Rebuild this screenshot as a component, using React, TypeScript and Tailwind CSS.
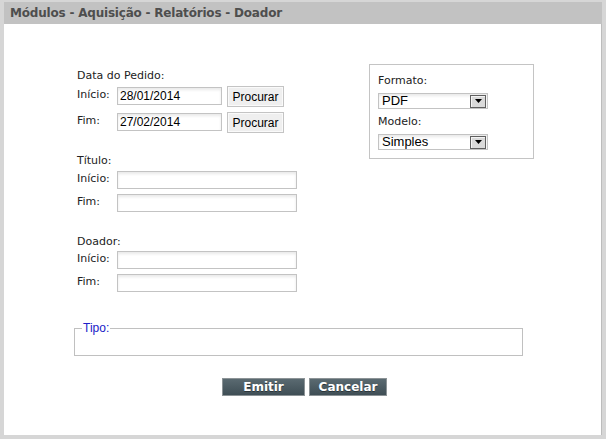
import React from 'react';

const label = "font-['DejaVu_Sans',Verdana,sans-serif] text-[11px] leading-[14px] text-[#222]";
const field = "font-['Liberation_Sans',Arial,sans-serif] text-[12px] text-black";
const inputBox =
  'border border-[#c3c3c3] bg-white shadow-[inset_0_2px_3px_rgba(0,0,0,0.09)] px-[2px] outline-none';

const TextRow: React.FC<{ name: string; value?: string; width: number; withButton?: boolean }> = ({ name, value, width, withButton }) => (
  <div className="flex items-start">
    <span className={`${label} w-[40px] ml-[3px] pt-[1px]`}>{name}</span>
    <input
      readOnly
      value={value ?? ''}
      className={`${inputBox} ${field} h-[18px] leading-[16px]`}
      style={{ width }}
    />
    {withButton && (
      <button className={`${field} ml-[5px] -mt-px h-[21px] w-[57px] border border-[#c4c4c4] bg-[#efefef] text-[#1a1a1a] shadow-[inset_0_0_0_1px_#fafafa]`}>
        Procurar
      </button>
    )}
  </div>
);

const FakeSelect: React.FC<{ value: string }> = ({ value }) => (
  <div className={`${inputBox} ${field} text-[13px] w-[110px] h-[16px] flex items-center justify-between pl-[3px] pr-px`}>
    <span className="leading-[14px]">{value}</span>
    <span className="w-[16px] h-[13px] border border-[#5f5f5f] bg-[#dadada] shadow-[inset_1px_1px_0_#f4f4f4] flex items-center justify-center">
      <svg width="7" height="4" viewBox="0 0 7 4">
        <path d="M0 0h7L3.5 4z" fill="#000" />
      </svg>
    </span>
  </div>
);

const ActionBtn: React.FC<{ width: number; children: React.ReactNode }> = ({ width, children }) => (
  <button
    className="h-[18px] border border-[#8c9396] bg-gradient-to-b from-[#5a6a71] to-[#3f4e55] text-white font-bold font-['DejaVu_Sans',Verdana,sans-serif] text-[12px] leading-[16px] [text-shadow:0_1px_0_#2a3439]"
    style={{ width }}
  >
    {children}
  </button>
);

const App: React.FC = () => {
  return (
    <div className="w-[606px] h-[439px] bg-[#d6d6d6] pt-[2px] px-[4px] pb-[4px] flex flex-col">
      <div className="h-[22px] bg-[#c2c2c2] flex items-center pl-[6px]">
        <h1 className="font-['DejaVu_Sans',Verdana,sans-serif] font-bold text-[12px] leading-[14px] text-[#4e4e4e] tracking-[-0.2px]">
          Módulos - Aquisição - Relatórios - Doador
        </h1>
      </div>

      <div className="flex-1 bg-white border-r border-[#bcbcbc] pt-[40px] pl-[70px]">
        <div className="flex items-start">
          <div className="w-[295px] pt-[5px] flex flex-col">
            <span className={`${label} ml-[3px]`}>Data do Pedido:</span>
            <div className="mt-[4px] flex flex-col gap-[6px]">
              <TextRow name="Início:" value="28/01/2014" width={105} withButton />
              <TextRow name="Fim:" value="27/02/2014" width={105} withButton />
            </div>

            <span className={`${label} ml-[3px] mt-[21px]`}>Título:</span>
            <div className="mt-[3px] flex flex-col gap-[5px]">
              <TextRow name="Início:" width={180} />
              <TextRow name="Fim:" width={180} />
            </div>

            <span className={`${label} ml-[3px] mt-[23px]`}>Doador:</span>
            <div className="mt-[2px] flex flex-col gap-[5px]">
              <TextRow name="Início:" width={180} />
              <TextRow name="Fim:" width={180} />
            </div>
          </div>

          <div className="w-[165px] h-[95px] border border-[#c4c4c4] pt-[9px] pl-[8px] flex flex-col">
            <span className={label}>Formato:</span>
            <div className="mt-[5px]">
              <FakeSelect value="PDF" />
            </div>
            <span className={`${label} mt-[6px]`}>Modelo:</span>
            <div className="mt-[5px]">
              <FakeSelect value="Simples" />
            </div>
          </div>
        </div>

        <fieldset className="mt-[29px] w-[449px] h-[35px] border border-[#c0c0c0] px-[7px]">
          <legend className="font-['Liberation_Sans',Arial,sans-serif] text-[12px] leading-[14px] text-[#2020c8] px-px">
            Tipo:
          </legend>
        </fieldset>

        <div className="mt-[22px] ml-[148px] flex gap-[4px]">
          <ActionBtn width={83}>Emitir</ActionBtn>
          <ActionBtn width={78}>Cancelar</ActionBtn>
        </div>
      </div>
    </div>
  );
};

export default App;
